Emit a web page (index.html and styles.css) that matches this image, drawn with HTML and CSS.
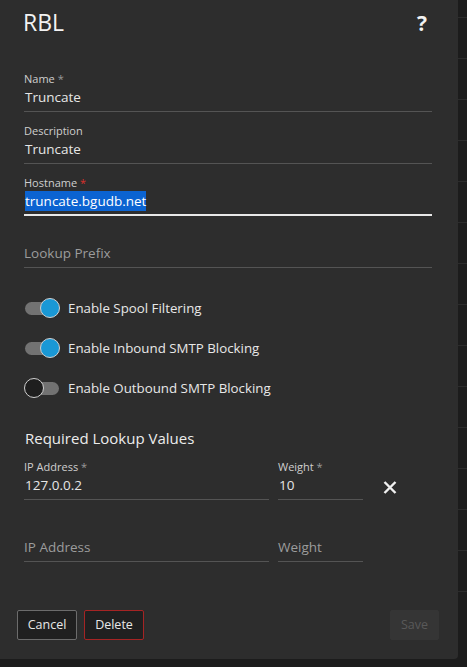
FILE: index.html
```html
<!DOCTYPE html>
<html>
<head>
<meta charset="utf-8">
<link rel="stylesheet" href="styles.css">
</head>
<body>
<div class="page">
  <div class="dialog">
    <div class="header">
      <div class="title">RBL</div>
      <div class="help">?</div>
    </div>
    <div class="field">
      <div class="label">Name <span class="req">*</span></div>
      <div class="value">Truncate</div>
    </div>
    <div class="field">
      <div class="label">Description</div>
      <div class="value">Truncate</div>
    </div>
    <div class="field focused">
      <div class="label">Hostname <span class="req red">*</span></div>
      <div class="value"><span class="sel">truncate.bgudb.net</span></div>
    </div>
    <div class="field">
      <div class="label"></div>
      <div class="value placeholder">Lookup Prefix</div>
    </div>
    <div class="toggles">
      <div class="toggle-row">
        <div class="switch on"><span class="track"></span><span class="knob"></span></div>
        <span class="toggle-label">Enable Spool Filtering</span>
      </div>
      <div class="toggle-row">
        <div class="switch on"><span class="track"></span><span class="knob"></span></div>
        <span class="toggle-label">Enable Inbound SMTP Blocking</span>
      </div>
      <div class="toggle-row">
        <div class="switch off"><span class="track"></span><span class="knob"></span></div>
        <span class="toggle-label">Enable Outbound SMTP Blocking</span>
      </div>
    </div>
    <div class="section-title">Required Lookup Values</div>
    <div class="lookup-row">
      <div class="field ip">
        <div class="label">IP Address <span class="req">*</span></div>
        <div class="value">127.0.0.2</div>
      </div>
      <div class="field weight">
        <div class="label">Weight <span class="req">*</span></div>
        <div class="value">10</div>
      </div>
      <div class="remove">
        <svg width="14" height="13" viewBox="0 0 14 13"><path d="M1.5 1 L12.5 12 M12.5 1 L1.5 12" stroke="#f0f0f0" stroke-width="2.4" stroke-linecap="butt" fill="none"/></svg>
      </div>
    </div>
    <div class="lookup-row second">
      <div class="field ip">
        <div class="label"></div>
        <div class="value placeholder">IP Address</div>
      </div>
      <div class="field weight">
        <div class="label"></div>
        <div class="value placeholder">Weight</div>
      </div>
    </div>
    <div class="footer">
      <div class="btn cancel">Cancel</div>
      <div class="btn delete">Delete</div>
      <div class="spacer"></div>
      <div class="btn save">Save</div>
    </div>
  </div>
  <div class="strip">
    <div class="strip-row"></div><div class="strip-row"></div><div class="strip-row"></div>
    <div class="strip-row"></div><div class="strip-row"></div><div class="strip-row"></div>
    <div class="strip-row"></div><div class="strip-row"></div><div class="strip-row"></div>
    <div class="strip-row"></div><div class="strip-row"></div><div class="strip-row"></div>
    <div class="strip-row"></div><div class="strip-row"></div><div class="strip-row"></div>
  </div>
</div>
</body>
</html>
```
FILE: styles.css
```css
html, body {
  margin: 0;
  padding: 0;
  background: #1c1c1c;
  font-family: "Open Sans", "Noto Sans", sans-serif;
  color: #e6e6e6;
}
.page {
  display: flex;
  width: 467px;
  height: 667px;
  overflow: hidden;
}
.dialog {
  width: 458px;
  height: 659px;
  background: #2d2d2d;
  border-bottom-right-radius: 4px;
  box-sizing: border-box;
  padding: 0 26px 0 24px;
  display: flex;
  flex-direction: column;
  flex-shrink: 0;
}
.header {
  height: 60px;
  box-sizing: border-box;
  padding-top: 11px;
  display: flex;
  justify-content: space-between;
  align-items: flex-start;
  margin-left: -1px;
}
.title {
  font-size: 23px;
  line-height: 23px;
  color: #f2f2f2;
}
.help {
  font-size: 21px;
  line-height: 21px;
  font-weight: 700;
  color: #f2f2f2;
  margin-top: 2px;
  margin-right: 5px;
}
.field {
  padding-top: 12px;
  padding-bottom: 3px;
  border-bottom: 1px solid #545454;
}
.field.focused {
  padding-bottom: 2px;
  border-bottom: 2px solid #e8e8e8;
}
.label {
  font-size: 11px;
  line-height: 14px;
  height: 14px;
  color: #cfcfcf;
}
.req {
  color: #9a9a9a;
}
.req.red {
  color: #d9302c;
}
.value {
  font-size: 13.5px;
  line-height: 22px;
  height: 22px;
  color: #e6e6e6;
  padding-left: 1px;
  white-space: nowrap;
}
.placeholder {
  color: #9c9c9c;
  padding-left: 0;
}
.sel {
  background: #0b63d1;
  color: #ffffff;
  padding: 1px 0;
}
.toggles {
  margin-top: 20px;
  display: flex;
  flex-direction: column;
}
.toggle-row {
  height: 40px;
  display: flex;
  align-items: center;
}
.switch {
  position: relative;
  width: 36px;
  height: 20px;
  flex-shrink: 0;
}
.track {
  position: absolute;
  left: 1px;
  top: 4px;
  width: 34px;
  height: 13px;
  border-radius: 7px;
  background: #727272;
}
.knob {
  position: absolute;
  top: 0;
  width: 18px;
  height: 18px;
  border-radius: 50%;
  border: 1px solid #d0d0d0;
}
.switch.on .knob {
  left: 16px;
  background: #1a98d5;
}
.switch.off .knob {
  left: 0;
  background: #1e1e1e;
}
.toggle-label {
  margin-left: 8px;
  font-size: 13.3px;
  color: #e8e8e8;
}
.section-title {
  margin-top: 20px;
  font-size: 15px;
  line-height: 20px;
  color: #ececec;
  padding-left: 1px;
}
.lookup-row {
  display: flex;
  align-items: flex-start;
}
.lookup-row.second {
  margin-top: 10px;
}
.field.ip {
  width: 245px;
}
.field.weight {
  width: 85px;
  margin-left: 9px;
}
.remove {
  margin-left: 20px;
  margin-top: 33px;
  width: 14px;
  height: 13px;
}
.remove svg {
  display: block;
}
.footer {
  margin-top: auto;
  margin-left: -7px;
  margin-right: -7px;
  padding-bottom: 19px;
  display: flex;
  align-items: center;
}
.spacer {
  flex: 1;
}
.btn {
  height: 30px;
  box-sizing: border-box;
  font-size: 12.5px;
  line-height: 28px;
  text-align: center;
  border-radius: 2px;
  color: #e8e8e8;
}
.cancel {
  width: 60px;
  border: 1px solid #6c6c6c;
  background: #202020;
}
.delete {
  width: 60px;
  margin-left: 7px;
  border: 1px solid #a52424;
  background: #202020;
}
.save {
  width: 49px;
  border: 1px solid #353535;
  background: #353535;
  color: #595959;
}
.strip {
  flex: 1;
  padding-top: 17px;
  display: flex;
  flex-direction: column;
}
.strip-row {
  height: 40px;
  border-top: 1px solid #2c2c2c;
  flex-shrink: 0;
}
```
